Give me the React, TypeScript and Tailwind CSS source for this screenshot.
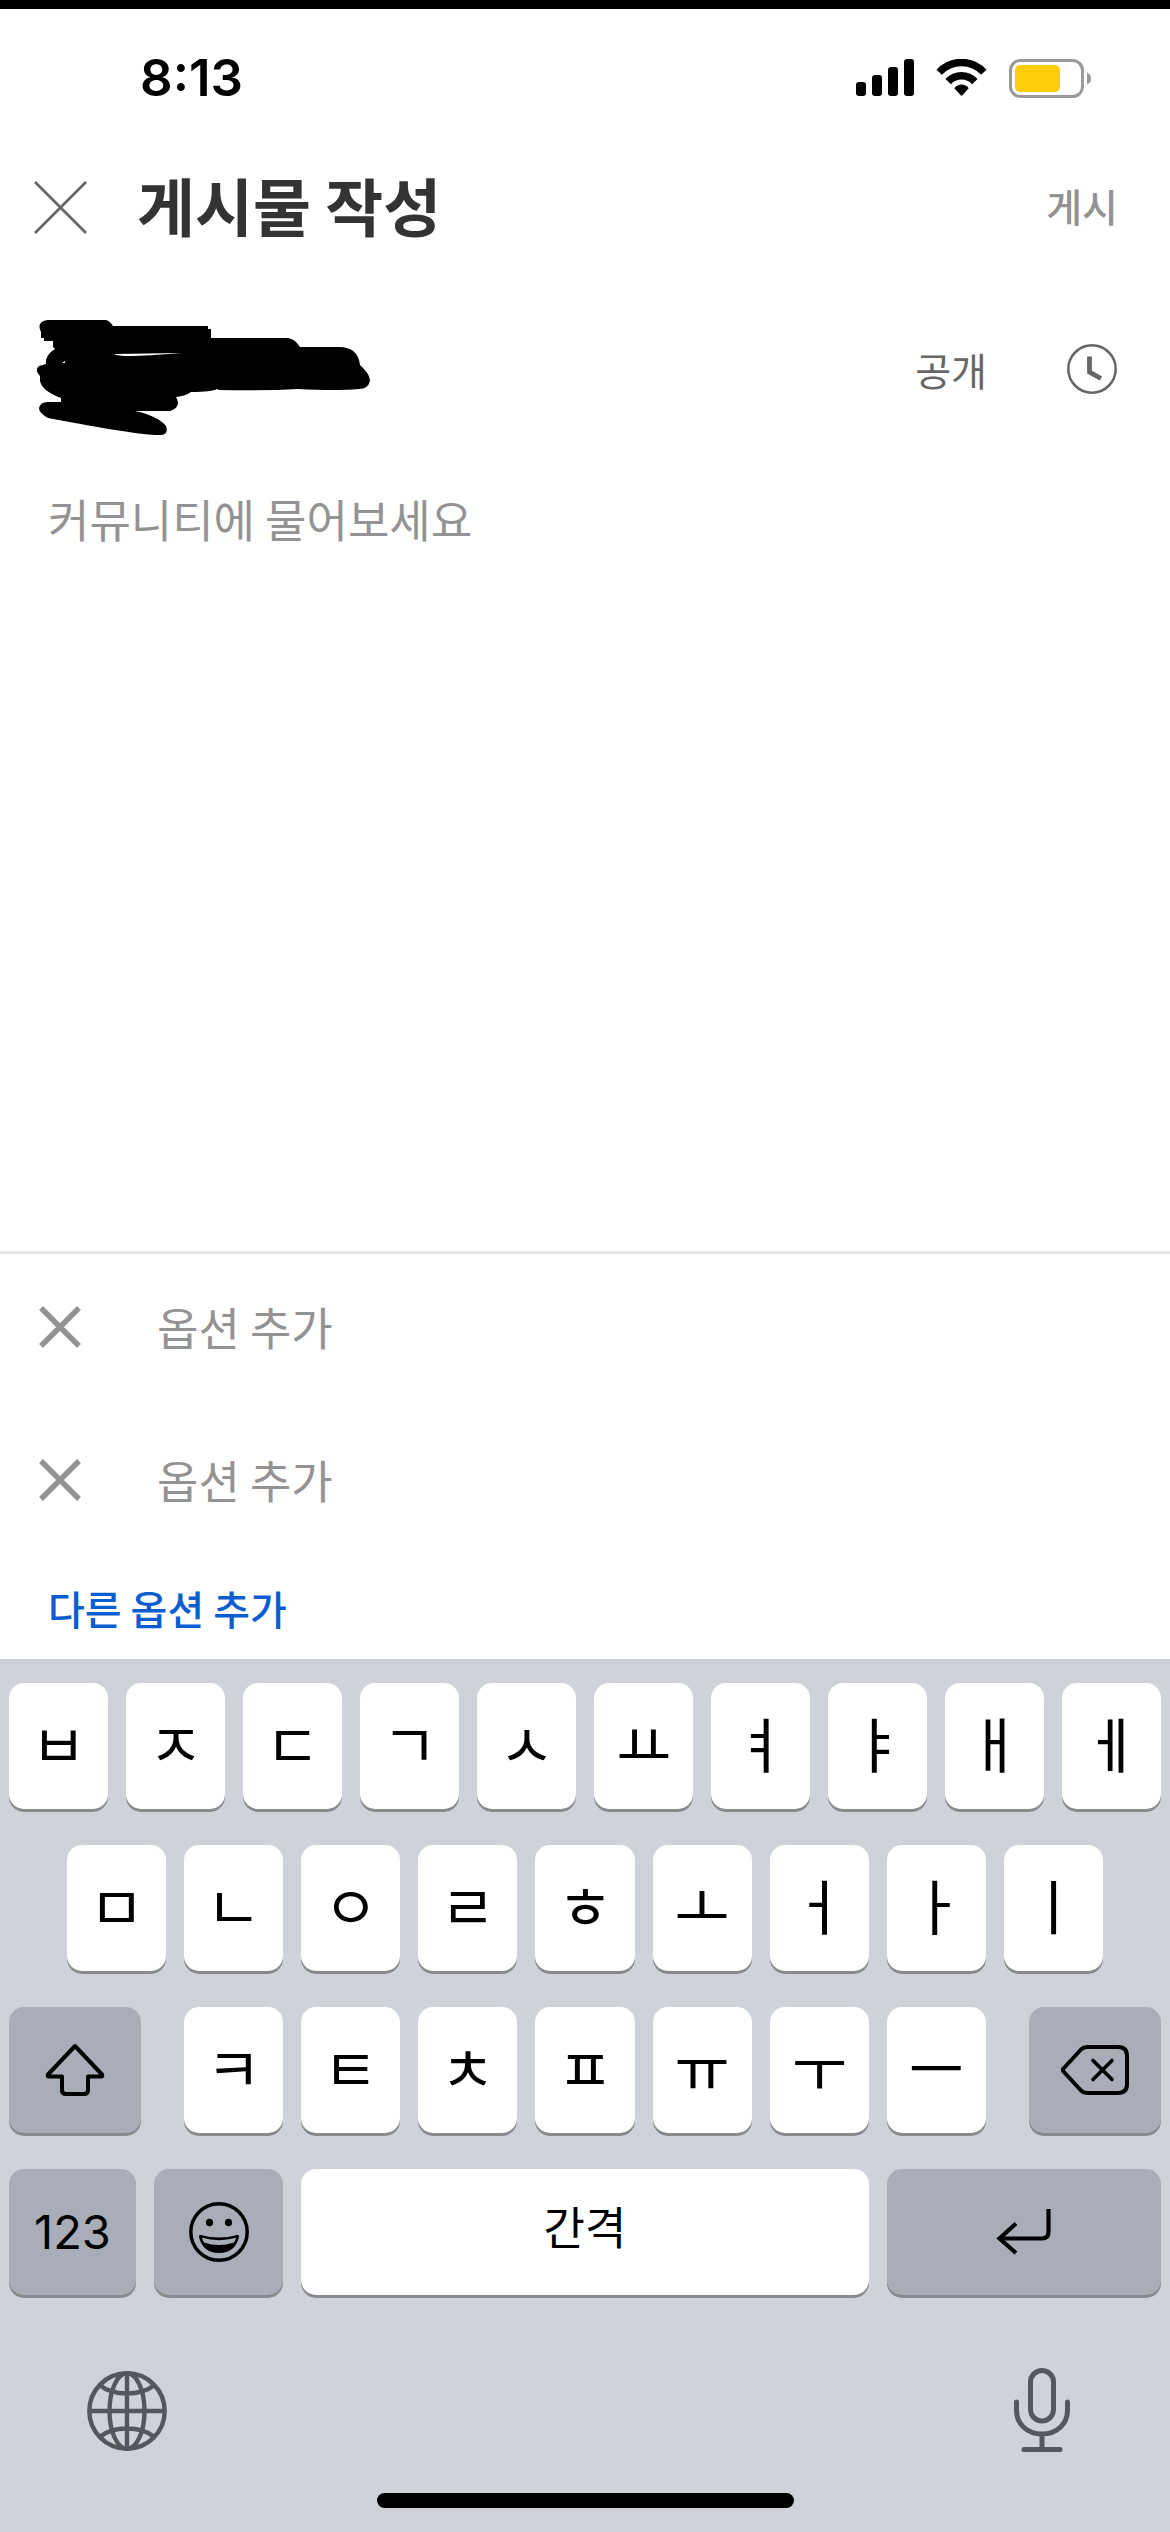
import React from 'react';

const KOREAN = "font-['Noto_Sans_CJK_KR',sans-serif]";

function SignalIcon() {
  return (
    <svg width="58" height="38" viewBox="0 0 58 38" aria-hidden="true">
      <rect x="0" y="23" width="10" height="14" rx="3" />
      <rect x="16" y="16" width="10" height="21" rx="3" />
      <rect x="32" y="8" width="10" height="29" rx="3" />
      <rect x="48" y="0" width="10" height="37" rx="3" />
    </svg>
  );
}

function WifiIcon() {
  return (
    <svg width="51" height="38" viewBox="0 0 51 38" aria-hidden="true">
      <g fill="none" stroke="#000" strokeWidth="7.5">
        <path d="M3.2 13.2A30.5 30.5 0 0 1 47.8 13.2" />
        <path d="M12.2 22.6A18 18 0 0 1 38.8 22.6" />
      </g>
      <path d="M18.3 29.2C22.2 24.3 28.8 24.3 32.7 29.2L26.3 36.3Q25.5 37 24.7 36.3Z" />
    </svg>
  );
}

function BatteryIcon() {
  return (
    <svg width="82" height="39" viewBox="0 0 82 39" aria-hidden="true">
      <rect x="1.5" y="1.5" width="72" height="36" rx="10" fill="none" stroke="#999" strokeWidth="3" />
      <rect x="6" y="6" width="45" height="27" rx="5" fill="#ffcc0a" />
      <path d="M78 13.5Q82 15 82 19.5T78 25.5Z" fill="#999" />
    </svg>
  );
}

function Scribble() {
  return (
    <svg width="335" height="117" viewBox="0 0 335 117" role="img" aria-label="가려진 이름">
      <path d="M11 0H70Q74 1 77 6H172V9H175V18H252Q259 19 264 27H303Q322 27 324 45Q334 54 334 61Q332 69 323 69Q300 71 262 69Q225 71 183 70L181 69Q176 72 155 72Q150 76 140 77Q146 87 134 91H99Q122 96 130 106Q133 115 124 115Q107 116 12 98Q3 93 3 88Q4 82 12 82H25V78Q6 71 4 61V56Q-2 50 3 46L10 44Q9 35 19 29L17 27V21H8V18H5V12Q0 2 11 0Z" />
      <path d="M78 34L145 33Q110 36 93 36Q82 36 78 34Z" fill="#fff" />
      <path d="M26 43L29 41V43Z" fill="#fff" />
    </svg>
  );
}

function ClockIcon() {
  return (
    <svg width="50" height="50" viewBox="0 0 50 50" fill="none" stroke="#666" aria-hidden="true">
      <circle cx="25" cy="25" r="23.7" strokeWidth="2.5" />
      <path d="M22.5 12.5V28L34 34.5" strokeWidth="4.8" />
    </svg>
  );
}

function Cross({ thin = false }: { thin?: boolean }) {
  return thin ? (
    <svg width="53" height="53" viewBox="0 0 53 53" stroke="#666" strokeWidth="2.8" aria-hidden="true">
      <path d="M1 1L52 52M52 1L1 52" />
    </svg>
  ) : (
    <svg width="42" height="42" viewBox="0 0 42 42" stroke="#939393" strokeWidth="5.4" aria-hidden="true">
      <path d="M2 2L40 40M40 2L2 40" />
    </svg>
  );
}

function ShiftIcon() {
  return (
    <svg width="60" height="54" viewBox="0 0 60 54" fill="none" stroke="#000" strokeWidth="4" strokeLinejoin="round" aria-hidden="true">
      <path d="M30 3L57 31.5Q58 33.500 56 33.500H43V47Q43 51 39 51H21Q17 51 17 47V33.500H4Q2 33.500 3 31.500Z" />
    </svg>
  );
}

function BackspaceIcon() {
  return (
    <svg width="68" height="50" viewBox="0 0 68 50" fill="none" stroke="#000" strokeWidth="4" strokeLinejoin="round" strokeLinecap="round" aria-hidden="true">
      <path d="M2.500 23.500L20 4.500Q22.500 2 26 2H57Q66 2 66 11V39Q66 48 57 48H26Q22.500 48 20 45.500L2.500 26.500Q1 25 2.500 23.500Z" />
      <path d="M32 15.500L51 34.500M51 15.500L32 34.500" strokeWidth="3.600" />
    </svg>
  );
}

function EmojiIcon() {
  return (
    <svg width="60" height="60" viewBox="0 0 60 60" aria-hidden="true">
      <circle cx="30" cy="30" r="28.200" fill="none" stroke="#000" strokeWidth="3.500" />
      <ellipse cx="20.500" cy="20.500" rx="3.600" ry="3.800" />
      <ellipse cx="39.500" cy="20.500" rx="3.600" ry="3.800" />
      <path d="M12 33Q30 38 48 33Q50.500 32.500 50 35Q46 51 30 51Q14 51 10 35Q9.500 32.500 12 33Z" />
      <path d="M13 35.800Q30 40.500 47 35.800Q46.500 38.500 45 40.500Q30 45.500 15 40.500Q13.500 38.500 13 35.800Z" fill="#a9adb8" />
    </svg>
  );
}

function ReturnIcon() {
  return (
    <svg width="56" height="46" viewBox="0 0 56 46" fill="none" stroke="#000" strokeWidth="4.200" aria-hidden="true">
      <path d="M52.500 0V23Q52.500 29.500 46 29.500H4" />
      <path d="M20 14.500L3.500 29.500L20 44" />
    </svg>
  );
}

function GlobeIcon() {
  return (
    <svg width="80" height="80" viewBox="0 0 80 80" fill="none" stroke="#54575c" strokeWidth="4.400" aria-hidden="true">
      <circle cx="40" cy="40" r="37.700" />
      <ellipse cx="40" cy="40" rx="17.500" ry="37.700" />
      <path d="M40 2V78M2 40H78M12.500 14Q23 22.500 40 22.500T67.500 14M12.500 66Q23 57.500 40 57.500T67.500 66" />
    </svg>
  );
}

function MicIcon() {
  return (
    <svg width="56" height="85" viewBox="0 0 56 85" fill="none" stroke="#54575c" strokeWidth="5" strokeLinecap="round" aria-hidden="true">
      <rect x="16.500" y="2.500" width="23" height="50.500" rx="11.500" />
      <path d="M2.500 34V42C2.500 56 13 66 28 66S53.500 56 53.500 42V34M28 66V81M10 81.500H46" />
    </svg>
  );
}

function Key({ label, dark = false, className = 'flex-1', children }: {
  label?: string;
  dark?: boolean;
  className?: string;
  children: React.ReactNode;
}) {
  return (
    <button
      type="button"
      aria-label={label}
      className={`flex h-[126px] min-w-0 items-center justify-center rounded-[15px] text-black shadow-[0_3px_0_#898a8d] ${dark ? 'bg-[#a9adb8]' : 'bg-white'} ${className}`}
    >
      {children}
    </button>
  );
}

function Letters({ keys }: { keys: string }) {
  return (
    <>
      {keys.split('').map((k) => (
        <Key key={k}>
          <span className="pb-2 text-[60px] leading-[80px]">{k}</span>
        </Key>
      ))}
    </>
  );
}

function OptionRow({ index }: { index: number }) {
  return (
    <div className="flex h-[145px] items-center pl-[39px]">
      <button type="button" aria-label={`옵션 ${index} 삭제`}>
        <Cross />
      </button>
      <input
        type="text"
        aria-label={`옵션 ${index}`}
        placeholder="옵션 추가"
        className="ml-[76px] h-[68px] min-w-0 flex-1 text-[45px] outline-none placeholder:text-[#939393]"
      />
    </div>
  );
}

export default function App() {
  return (
    <div className={`flex min-h-screen flex-col border-t-[9px] border-black bg-white ${KOREAN}`}>
      <div className="flex h-[138px] items-center justify-between pr-[79px] pl-[140px]">
        <span className="font-[Inter] text-[51px] leading-[60px] font-semibold text-black">8:13</span>
        <div className="flex items-center gap-[22px]">
          <SignalIcon />
          <WifiIcon />
          <BatteryIcon />
        </div>
      </div>

      <header className="flex h-[120px] items-center pr-[52px] pl-[34px]">
        <button type="button" aria-label="닫기">
          <Cross thin />
        </button>
        <h1 className="ml-[50px] flex-1 pb-1.5 text-[63px] leading-[80px] font-bold text-[#333]">게시물 작성</h1>
        <button type="button" className="pb-1 text-[39px] leading-[60px] font-medium text-[#939393]">게시</button>
      </header>

      <div className="mt-[53px] flex h-[117px] items-start pr-[53px] pl-[36px]">
        <Scribble />
        <div className="mt-[19px] ml-auto flex items-center gap-[80px]">
          <button type="button" className="text-[39px] leading-[60px] text-[#666]">공개</button>
          <button type="button" aria-label="예약">
            <ClockIcon />
          </button>
        </div>
      </div>

      <textarea
        aria-label="게시물 내용"
        placeholder="커뮤니티에 물어보세요"
        className="mt-[48px] min-h-[200px] flex-1 resize-none px-[48px] text-[45px] leading-[68px] outline-none placeholder:text-[#939393]"
      />

      <section className="border-t-[3px] border-[#e5e5e5]">
        <div className="flex flex-col gap-2">
          <OptionRow index={1} />
          <OptionRow index={2} />
        </div>
        <button type="button" className="mt-1 ml-[48px] block h-[103px] text-[40px] font-medium text-[#0b5ed0]">
          다른 옵션 추가
        </button>
      </section>

      <div className="bg-[#cfd2d8] px-[9px] pt-[24px] pb-[24px]">
        <div className="flex flex-col gap-[36px]">
          <div className="flex gap-[18px]">
            <Letters keys="ㅂㅈㄷㄱㅅㅛㅕㅑㅐㅔ" />
          </div>
          <div className="flex gap-[18px] px-[58px]">
            <Letters keys="ㅁㄴㅇㄹㅎㅗㅓㅏㅣ" />
          </div>
          <div className="flex gap-[43px]">
            <Key label="Shift" dark className="w-[132px] shrink-0"><ShiftIcon /></Key>
            <div className="flex flex-1 gap-[18px]">
              <Letters keys="ㅋㅌㅊㅍㅠㅜㅡ" />
            </div>
            <Key label="지우기" dark className="w-[132px] shrink-0"><BackspaceIcon /></Key>
          </div>
          <div className="flex gap-[18px]">
            <Key dark className="flex-[127]">
              <span className="font-[Inter] text-[47px] leading-[60px]">123</span>
            </Key>
            <Key label="이모티콘" dark className="flex-[129]"><EmojiIcon /></Key>
            <Key className="flex-[568]">
              <span className="pb-3 text-[45px] leading-[68px]">간격</span>
            </Key>
            <Key label="줄바꿈" dark className="flex-[274]"><ReturnIcon /></Key>
          </div>
        </div>
        <div className="mt-[73px] flex items-center justify-between pr-[91px] pl-[78px]">
          <button type="button" aria-label="다음 키보드"><GlobeIcon /></button>
          <button type="button" aria-label="받아쓰기"><MicIcon /></button>
        </div>
        <div className="mx-auto mt-[40px] h-[15px] w-[417px] rounded-full bg-black" />
      </div>
    </div>
  );
}
